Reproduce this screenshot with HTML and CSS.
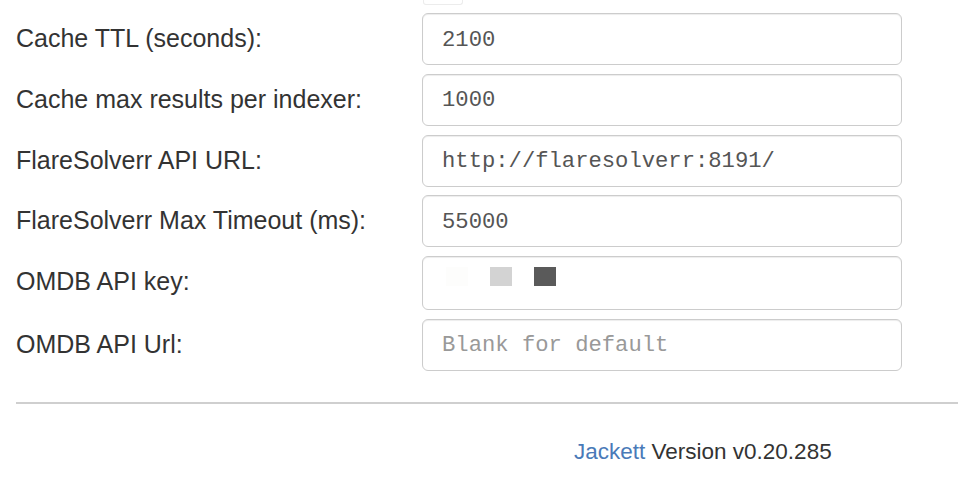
FILE: index.html
```html
<!DOCTYPE html>
<html>
<head>
<meta charset="utf-8">
<link rel="stylesheet" href="styles.css">
</head>
<body>
<div class="page">
  <div class="top-stub"></div>
  <div class="form">
    <div class="row">
      <label class="label">Cache TTL (seconds):</label>
      <input class="field" type="text" value="2100">
    </div>
    <div class="row">
      <label class="label">Cache max results per indexer:</label>
      <input class="field" type="text" value="1000">
    </div>
    <div class="row">
      <label class="label">FlareSolverr API URL:</label>
      <input class="field" type="text" value="http://flaresolverr:8191/">
    </div>
    <div class="row">
      <label class="label">FlareSolverr Max Timeout (ms):</label>
      <input class="field" type="text" value="55000">
    </div>
    <div class="row">
      <label class="label">OMDB API key:</label>
      <div class="field field-key">
        <span class="sq sq-1"></span>
        <span class="sq sq-2"></span>
        <span class="sq sq-3"></span>
      </div>
    </div>
    <div class="row">
      <label class="label">OMDB API Url:</label>
      <input class="field" type="text" placeholder="Blank for default">
    </div>
  </div>
  <hr class="rule">
  <div class="footer"><a class="brand" href="#">Jackett</a> Version v0.20.285</div>
</div>
</body>
</html>
```

FILE: styles.css
```css
html, body {
  margin: 0;
  padding: 0;
  background: #fff;
}
.page {
  padding-left: 16px;
  font-family: "Liberation Sans", Arial, sans-serif;
  color: #333;
}
.top-stub {
  margin-left: 407px;
  width: 38px;
  height: 4px;
  border: 1px solid #ececec;
  border-top: 0;
  border-radius: 0 0 3px 3px;
}
.form {
  margin-top: 8px;
  display: flex;
  flex-direction: column;
  gap: 8.8px;
}
.row {
  display: flex;
  align-items: flex-start;
}
.label {
  width: 406px;
  flex: none;
  font-size: 25px;
  line-height: 34px;
  padding-top: 8px;
  color: #333;
}
.field {
  box-sizing: border-box;
  width: 480px;
  height: 52px;
  margin: 0;
  border: 1.5px solid #ccc;
  border-radius: 6px;
  box-shadow: inset 0 1px 1px rgba(0,0,0,.075);
  padding: 2px 18px 0 19px;
  font-family: "Liberation Mono", "Courier New", monospace;
  font-size: 22.2px;
  color: #555;
  background: #fff;
  outline: none;
}
.field::placeholder {
  color: #999;
}
.field-key {
  height: 54px;
  display: flex;
  gap: 22px;
  padding: 10px 0 0 23px;
}
.sq {
  width: 22px;
  height: 19px;
  display: block;
}
.sq-1 { background: #fdfdfc; }
.sq-2 { background: #d3d3d3; }
.sq-3 { background: #5a5a5a; }
.rule {
  margin: 31px 0 0;
  border: 0;
  border-top: 2px solid #cfcfcf;
  height: 0;
}
.footer {
  margin-top: 33px;
  padding-left: 558px;
  font-size: 22.5px;
  line-height: 30px;
  color: #333;
}
.brand {
  color: #4a7ab8;
  text-decoration: none;
}
```
